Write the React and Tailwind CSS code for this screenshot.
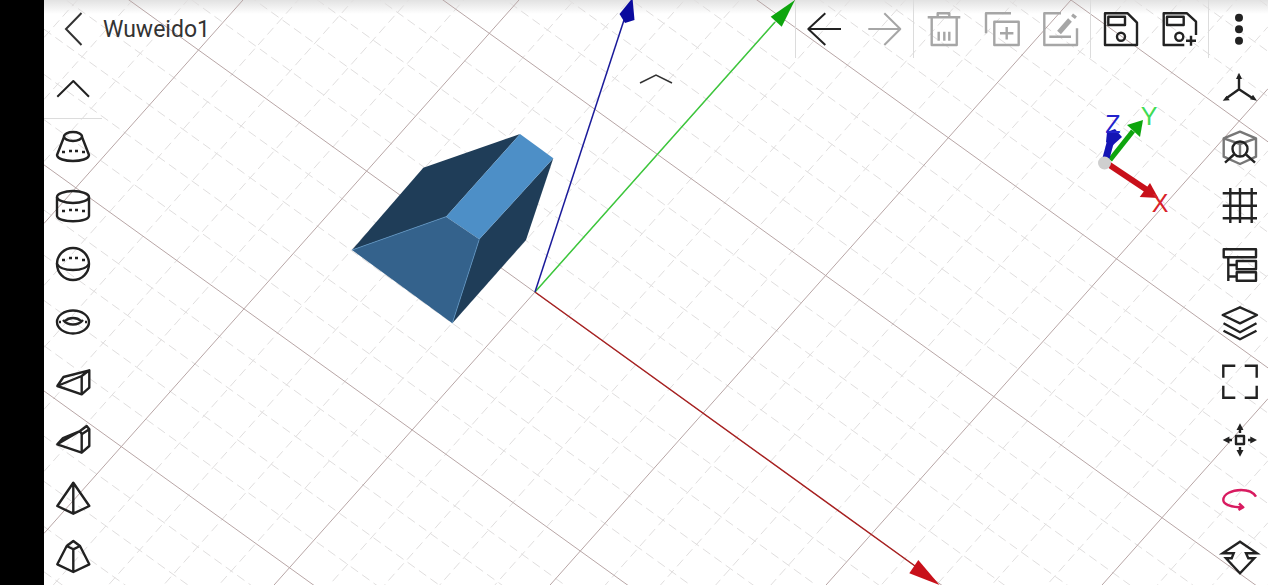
const range = (from, to, step) => {
  const out = [];
  for (let v = from; v <= to; v += step) out.push(v);
  return out;
};

// grid lines in page coordinates, measured off the viewport
const SLOPE_X = 0.72;
const SLOPE_Y = 1.123;
const LEFT = 44;
const RIGHT = 1268;
const xLine = (x0) => ({ x1: LEFT, y1: (LEFT - x0) * SLOPE_X, x2: RIGHT, y2: (RIGHT - x0) * SLOPE_X });
const yLine = (x0) => ({ x1: LEFT, y1: (x0 - LEFT) * SLOPE_Y, x2: RIGHT, y2: (x0 - RIGHT) * SLOPE_Y });

const xMajor = range(-499, 1071, 314);
const yMajor = range(243, 1623, 276);
const xMinor = range(-813, 1268, 62.8).filter((_, i) => i % 5 !== 0);
const yMinor = range(-33, 1899, 55.2).filter((_, i) => i % 5 !== 0);

function Viewport() {
  return (
    <svg viewBox="44 0 1224 585" className="absolute inset-0 h-full w-full">
      {xMinor.map((x0) => <line key={x0} {...xLine(x0)} stroke="#e0dede" strokeDasharray="9 5" />)}
      {yMinor.map((x0) => <line key={x0} {...yLine(x0)} stroke="#e0dede" strokeDasharray="9 5" />)}
      {xMajor.map((x0) => <line key={x0} {...xLine(x0)} stroke="#b8a6a6" />)}
      {yMajor.map((x0) => <line key={x0} {...yLine(x0)} stroke="#b8a6a6" />)}

      <polyline points="640,83 656,75 672,83" fill="none" stroke="#333" strokeWidth="1.5" />

      <line x1="535" y1="292" x2="915" y2="566" stroke="#a82020" strokeWidth="1.5" />
      <polygon points="939.5,585 918.3,560 909.3,573.3" fill="#c8101a" />
      <line x1="535" y1="292" x2="775" y2="22" stroke="#3cc83c" strokeWidth="1.5" />
      <polygon points="795,0 770.7,16.7 781.7,26.7" fill="#0ea50e" />
      <line x1="535" y1="292" x2="624" y2="20" stroke="#1a1a9a" strokeWidth="1.5" />
      <polygon points="632.5,-2 634.5,20 625,23 619.5,14" fill="#0a0a9e" />

      <polygon points="352,250 423.3,167.7 520,134 446,216.7" fill="#1f3d58" />
      <polygon points="479.3,239.3 553.3,158.3 526,240 452.3,323.3" fill="#1f3d58" />
      <polygon points="520,134 553.3,158.3 479.3,239.3 446,216.7" fill="#4d8fc7" />
      <polygon points="352,250 446,216.7 479.3,239.3 452.3,323.3" fill="#34628c" />
      <polyline points="352,250 446,216.7" fill="none" stroke="#5a92c0" strokeWidth="0.8" />
      <polyline points="479.3,239.3 452.3,323.3" fill="none" stroke="#5a92c0" strokeWidth="0.8" />

      <line x1="1108" y1="164" x2="1147" y2="190" stroke="#c8101a" strokeWidth="6" />
      <polygon points="1158.3,198 1150,183 1139.7,197" fill="#c8101a" />
      <line x1="1110" y1="160" x2="1133" y2="131" stroke="#0ea50e" strokeWidth="5" />
      <polygon points="1143,120 1127,125 1140,137" fill="#0ea50e" />
      <line x1="1105" y1="162" x2="1112" y2="136" stroke="#1414b4" strokeWidth="7" />
      <polygon points="1115,129 1122,137 1112,146 1106,142 1107,132" fill="#1414b4" />
      <circle cx="1104.5" cy="163" r="6.5" fill="#cfcfcf" />
      <text x="1160" y="212" textAnchor="middle" fontSize="25" fill="#d8222a" fontFamily="'Liberation Sans', sans-serif">X</text>
      <text x="1149" y="125" textAnchor="middle" fontSize="25" fill="#3fdc55" fontFamily="'Liberation Sans', sans-serif">Y</text>
      <text x="1113" y="133" textAnchor="middle" fontSize="25" fill="#2222cc" fontFamily="'Liberation Sans', sans-serif">Z</text>
    </svg>
  );
}

function Icon({ children, className = 'text-[#222]', width = 2.4 }) {
  return (
    <svg
      viewBox="0 0 34 34"
      fill="none"
      stroke="currentColor"
      strokeWidth={width}
      strokeLinejoin="round"
      className={`h-[34px] w-[34px] overflow-visible ${className}`}
    >
      {children}
    </svg>
  );
}

const Arrowheads = ({ d }) => <path d={d} fill="currentColor" stroke="none" />;

const SHAPE_ICONS = [
  <>
    <ellipse cx="17" cy="5.500" rx="9" ry="4.500" />
    <path d="M8 6 1 24c1 8 31 8 32 0L26 6" />
    <path d="M6 21h3M13 20h3M19 20h3M26 21h3" />
  </>,
  <>
    <ellipse cx="17" cy="8" rx="16" ry="6" />
    <path d="M1 8v19c2 7 30 7 32 0V8" />
    <path d="M6 22h3M13 21h3M19 21h3M26 22h3" />
  </>,
  <>
    <circle cx="17" cy="17" r="16" />
    <path d="M1 17c4 8 28 8 32 0" />
    <path d="M6 13h3M13 11h3M19 11h3M26 13h3" />
  </>,
  <>
    <ellipse cx="17" cy="17" rx="16" ry="11.500" />
    <path d="M7 15c5 6 15 6 20 0M9 16c4-4 12-4 16 0" />
    <path d="M3 17h2M29 17h2" />
  </>,
  <path d="M1.300 23 7.500 14 33.300 7.300v17.400L25.700 31.300 1.300 23 25.700 13l7.600-5.700M25.700 13v18.300" />,
  <path d="M1.300 23.300 7 17 24 10 30.700 5l2.600 3.300V25l-7.600 6.700L1.300 23.300 24 10M25.700 13.300v18.400M24 10l1.700 3.300 7.600-5" />,
  <path d="M17.300 3.700 1.300 27l16 7.700 16-7.700-16-23.300v31" />,
  <path d="M10.700 9 17.300 4 24 9l-6.700 3.300L10.700 9 1.300 27.300 17.300 35l16-7.700L24 9M17.300 12.300V35" />,
];

const VIEW_ICONS = [
  <>
    <path d="M17 17.300V4M17 17.300 4 26.500M17 17.300l14 9.200" />
    <Arrowheads d="M17 .7 14 7h6ZM.7 28.700l7-.5-3-4.500ZM35 28.700l-4-6-3 4.500Z" />
  </>,
  <>
    <g stroke="#777">
      <path d="M18 1.700 1.700 8.300v18.400L18 34l16-7.300V8.300ZM1.700 8.300 18 14l16-5.700M18 14v12" />
    </g>
    <circle cx="18" cy="19" r="7.500" />
    <path d="M12 24.500 3 32.700M24 24.500l9 8.200" />
  </>,
  <path d="M8.300 0v35M18 0v35M29.700 0v35M.7 5.300H35M.7 17.700H35M.7 30.300H35" />,
  <>
    <path d="M1.700 3.300H34v8H1.700ZM14.700 15H34v8.300H14.700ZM14.700 26.300H34v8.400H14.700Z" />
    <path d="M6.300 11.300V35M6.300 19h8.400M6.300 30.500h8.400" />
  </>,
  <path d="M.7 11 18 3.300 35 11l-17 8.300ZM1.500 19.300l16.500 9 16.500-9M1.500 26.700l16.500 8.600 16.500-8.600" />,
  <path d="M1.300 15.700v-12h12M22.700 3.700h12v12M34.700 23.700v12h-12M13.300 35.700h-12v-12" strokeLinejoin="miter" />,
  <>
    <rect x="14" y="16" width="8" height="8" />
    <path d="M18 8v5M18 27v5M5 20h5M26 20h5" />
    <Arrowheads d="M18 3.300 14.500 10h7ZM18 36.700l3.500-6.700h-7ZM.7 20l6.700 3.500v-7ZM35 20l-6.700-3.500v7Z" />
  </>,
  <path
    d="M34 18.700C31 13.500 24 12 19 12 10 12 1.300 16 1.300 22c0 4.500 8 7.300 20 7.300M17 25.500l4.300 3.800-4.800 2.700"
    stroke="#d81b60"
  />,
  <path d="M.7 17.300 18 5.700l17 11.600H24l2.300 5h6L18 37.300 4 22.300h5.700l2-5Z" strokeLinejoin="miter" />,
];

const GRAY = 'text-[#a6a6a6]';

const TOP_GROUPS = [
  [
    <Icon width={2}><path d="M-.7 17H32M16.300 1.300-.7 17l17 16" /></Icon>,
    <Icon className={GRAY} width={2}><path d="M32.300 17H.3M16.300 1.300l16 15.700-16 16" /></Icon>,
  ],
  [
    <Icon className={GRAY}>
      <path d="M.7 5.300h32.600M10.700 5.300v-4h11.600v4M4.700 5.300V33h25V5.300M11.700 19.700v9M17.300 19.700v9M22.300 19.700v9" />
    </Icon>,
    <Icon className={GRAY}>
      <path d="M0 21.300V1.300h25M8.300 9.700h24.400V33H8.300ZM20.700 15v12.600M14 21.300h13.400" />
    </Icon>,
    <Icon className={GRAY}>
      <path d="M16 1.300H-.7V33H32V16.300M4.300 24.700H26" />
      <path d="M14 20.500 25 8" strokeWidth="5" />
      <path d="M28 5.500 30 3" strokeWidth="5" />
    </Icon>,
  ],
  [
    <Icon>
      <path d="M1 1.300h22.700L33 10.700V33H1ZM4.300 4.700H21V13H4.300Z" />
      <circle cx="17" cy="24.700" r="4" />
    </Icon>,
    <Icon>
      <path d="M21.300 33H.7V1.300H24l9 8.400V23M4 4.700h16.700V13H4Z" />
      <circle cx="16.300" cy="24.700" r="4" />
      <path d="M23 28.700h10M28 23.700v10" />
    </Icon>,
  ],
  [
    <Icon>
      <g fill="currentColor" stroke="none">
        <circle cx="17" cy="5.700" r="4" />
        <circle cx="17" cy="17.300" r="4" />
        <circle cx="17" cy="28.700" r="4" />
      </g>
    </Icon>,
  ],
];

export default function App() {
  return (
    <div className="flex h-[585px] w-[1268px] overflow-hidden bg-white">
      <div className="w-[44px] shrink-0 bg-black" />

      <div className="relative flex min-w-0 flex-1 flex-col">
        <div className="absolute inset-x-0 top-0 h-[14px] bg-gradient-to-b from-[#e2e2e2] to-transparent" />
        <Viewport />

        <div className="relative flex h-[58px] items-center">
          <div className="flex w-[59px] justify-center">
            <svg viewBox="0 0 20 34" className="h-[34px] w-[20px]" fill="none" stroke="#333" strokeWidth="2">
              <path d="M17.500 1 2 17l15.500 16" />
            </svg>
          </div>
          <span className="text-[23px] leading-none text-[#333] [font-family:Roboto,sans-serif]">
            Wuweido1
          </span>
          <div className="ml-auto flex">
            {TOP_GROUPS.map((group, g) => (
              <div key={g} className="-ml-px flex h-[58px] border-l border-[#dcdcdc]">
                {group.map((icon, i) => (
                  <div key={i} className="flex w-[59px] items-center justify-center">{icon}</div>
                ))}
              </div>
            ))}
          </div>
        </div>

        <div className="relative flex flex-1 justify-between pt-[2px]">
          <div className="flex w-[58px] flex-col">
            <div className="flex h-[59px] items-center justify-center border-b border-[#dcdcdc] pb-px">
              <Icon width={2}><path d="M1.300 24.700 17.300 9 33 24.700" /></Icon>
            </div>
            {SHAPE_ICONS.map((icon, i) => (
              <div key={i} className="flex h-[58px] shrink-0 items-center justify-center">
                <Icon>{icon}</Icon>
              </div>
            ))}
          </div>
          <div className="flex w-[59px] flex-col">
            {VIEW_ICONS.map((icon, i) => (
              <div key={i} className="flex h-[58px] shrink-0 items-center justify-center">
                <Icon>{icon}</Icon>
              </div>
            ))}
          </div>
        </div>
      </div>
    </div>
  );
}
